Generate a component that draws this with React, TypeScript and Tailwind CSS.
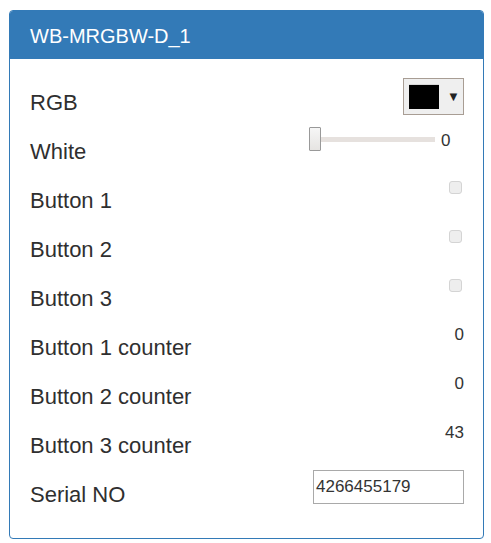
const rows: { label: string; kind: string; value?: string }[] = [
  { label: "RGB", kind: "color" },
  { label: "White", kind: "range", value: "0" },
  { label: "Button 1", kind: "check" },
  { label: "Button 2", kind: "check" },
  { label: "Button 3", kind: "check" },
  { label: "Button 1 counter", kind: "text", value: "0" },
  { label: "Button 2 counter", kind: "text", value: "0" },
  { label: "Button 3 counter", kind: "text", value: "43" },
  { label: "Serial NO", kind: "input", value: "4266455179" },
];

function Control({ kind, value }: { kind: string; value?: string }) {
  if (kind === "color") {
    return (
      <div className="-mt-px flex h-[37px] w-[61px] items-center border border-[#a89d94] bg-[#efefef] pl-[5px]">
        <div className="h-[25px] w-[30px] border-t border-[#d8d8d8] bg-black" />
        <span className="ml-[8px] text-[13px] leading-none text-[#222]">▼</span>
      </div>
    );
  }
  if (kind === "range") {
    return (
      <div className="-mt-px flex items-start">
        <div className="flex items-center">
          <div className="h-[24px] w-[12px] rounded-[1px] border border-[#999] bg-gradient-to-b from-[#f6f6f6] to-[#e6e4e2]" />
          <div className="h-[5px] w-[114px] bg-[#e6e1de]" />
        </div>
        <span className="ml-[6px] w-[23px] pt-[4px] text-[17px] leading-[20px] text-[#333]">{value}</span>
      </div>
    );
  }
  if (kind === "check") {
    return (
      <div className="mt-[4px] mr-[2px] h-[13px] w-[13px] rounded-[3px] border border-[#d4d4d4] bg-[#eeeeee]" />
    );
  }
  if (kind === "input") {
    return (
      <div className="-mt-px flex h-[34px] w-[151px] items-center border border-[#a9a9a9] bg-white pl-[2px] text-[17px] text-[#333]">
        {value}
      </div>
    );
  }
  return <span className="mt-[1px] text-[17px] leading-[20px] text-[#333]">{value}</span>;
}

export default function App() {
  return (
    <div className="h-[543px] w-[491px] bg-white pl-[9px] pt-[10px] font-['Liberation_Sans',Arial,sans-serif]">
      <div className="h-[529px] w-[475px] overflow-hidden rounded-[4px] border border-[#337ab7]">
        <div className="flex h-[48px] items-center bg-[#337ab7] pl-[20px] pt-px text-[20px] text-white">
          WB-MRGBW-D_1
        </div>
        <div className="pt-[20px]">
          {rows.map((r) => (
            <div key={r.label} className="flex h-[49px] items-start justify-between pl-[20px] pr-[19px]">
              <span className="mt-[12px] text-[22px] leading-[24px] text-[#2f2f2f]">{r.label}</span>
              <Control kind={r.kind} value={r.value} />
            </div>
          ))}
        </div>
      </div>
    </div>
  );
}
